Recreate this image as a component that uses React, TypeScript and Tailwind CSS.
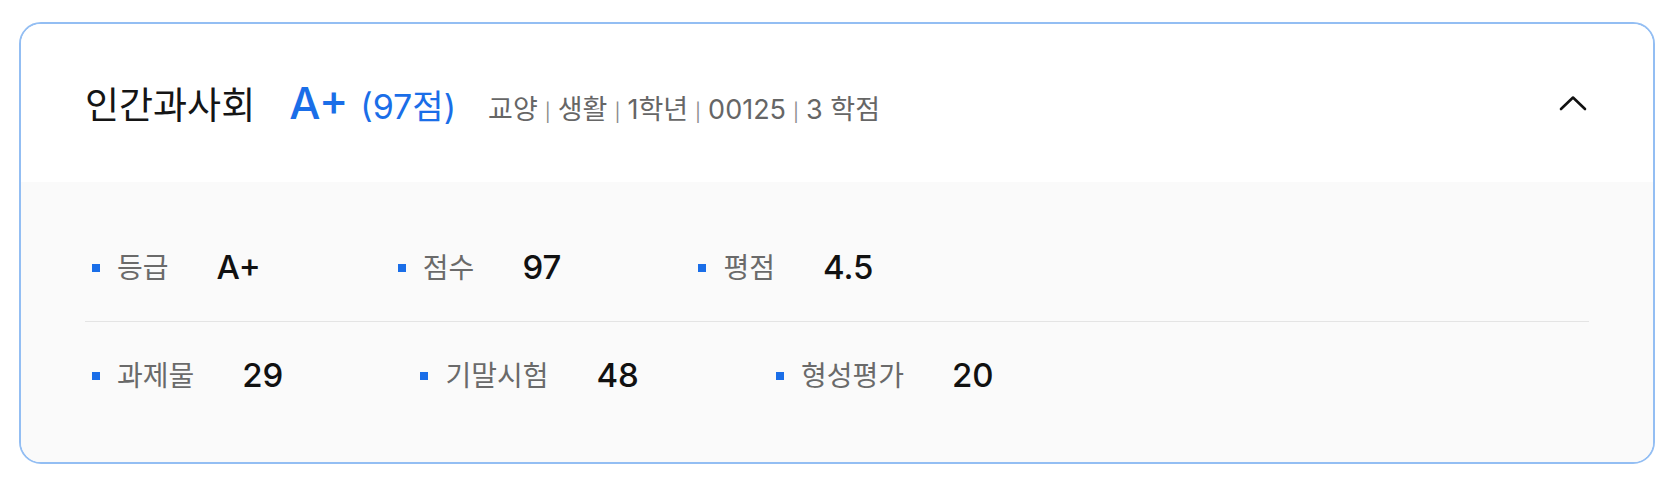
import { Fragment } from "react";

const FONT = "font-['Inter','Noto_Sans_CJK_KR',sans-serif]";

const meta = ["교양", "생활", "1학년", "00125", "3 학점"];

const rows = [
  [
    { label: "등급", value: "A+" },
    { label: "점수", value: "97" },
    { label: "평점", value: "4.5" },
  ],
  [
    { label: "과제물", value: "29" },
    { label: "기말시험", value: "48" },
    { label: "형성평가", value: "20" },
  ],
];

function Stat({ label, value }: { label: string; value: string }) {
  return (
    <div className="flex items-center">
      <span className="w-[8px] h-[8px] bg-[#1a6ee8] shrink-0" />
      <span className="ml-[17px] text-[28px] text-[#6a6a6a]">{label}</span>
      <span className="ml-[48px] text-[33px] font-medium text-[#111]">{value}</span>
    </div>
  );
}

export default function App() {
  return (
    <div className={`${FONT} bg-white min-h-[490px] pl-[19px] pt-[22px]`}>
      <div className="w-[1636px] rounded-[22px] border-2 border-[#93bef3] overflow-hidden">
        {/* Header */}
        <div className="h-[158px] px-16 flex items-center justify-between bg-white">
          <div className="flex items-baseline">
            <h2 className="text-[37px] text-[#151515]">인간과사회</h2>
            <span className="ml-[34px] text-[#1a6ee8]">
              <span className="text-[44px] font-medium">A+</span>
              <span className="text-[34px] ml-[12px]">(97점)</span>
            </span>
            <div className="ml-[32px] flex items-baseline text-[27px] text-[#666]">
              {meta.map((m, i) => (
                <Fragment key={m}>
                  {i > 0 && <span className="mx-[7px] text-[18px] text-[#8a8a8a]">|</span>}
                  <span>{m}</span>
                </Fragment>
              ))}
            </div>
          </div>
          <button className="mr-[1px]">
            <svg width="30" height="18" viewBox="0 0 30 18" fill="none">
              <polyline points="3,15 15,3.5 27,15" stroke="#111" strokeWidth="2.6" strokeLinecap="round" strokeLinejoin="round" />
            </svg>
          </button>
        </div>

        {/* Detail */}
        <div className="bg-[#fafafa] px-16 py-8">
          {rows.map((row, ri) => (
            <div
              key={ri}
              className={`h-[108px] pl-[7px] flex items-center gap-[137px] ${ri === 0 ? "border-b border-[#e4e4e4]" : ""}`}
            >
              {row.map((s) => (
                <Stat key={s.label} label={s.label} value={s.value} />
              ))}
            </div>
          ))}
        </div>
      </div>
    </div>
  );
}
